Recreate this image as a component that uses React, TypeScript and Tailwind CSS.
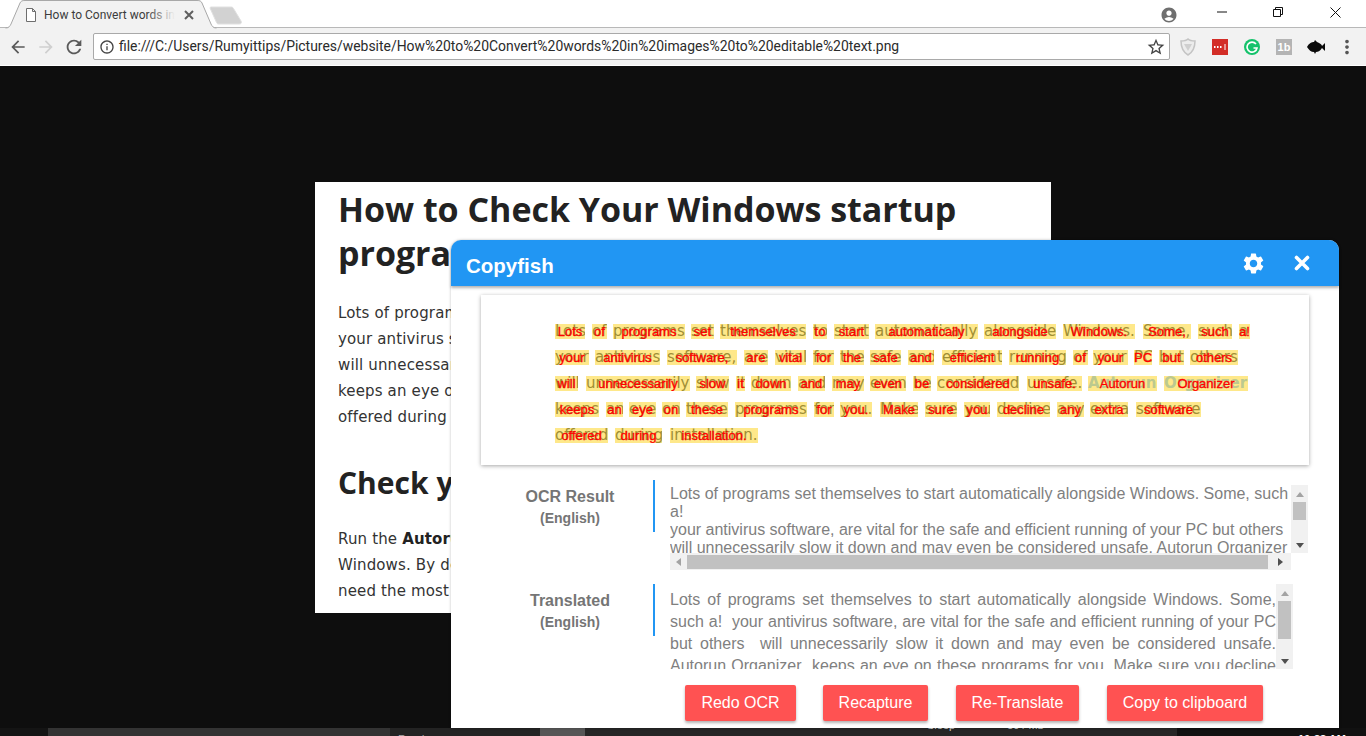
import React from "react";
import { MdArrowBack, MdArrowForward, MdRefresh, MdInfoOutline, MdStarBorder, MdAccountCircle, MdMoreVert, MdSettings } from "react-icons/md";

type W = [string, number, number, boolean?];
const LINES: { top: number; words: W[] }[] = [
  { top: 324, words: [["Lots",555,585],["of",592,607],["programs",613,685],["set",691,714],["themselves",720,806],["to",813,827],["start",834,869],["automatically",875,978],["alongside",984,1056],["Windows.",1063,1135],["Some,",1143,1191],["such",1198,1232],["a!",1239,1250]] },
  { top: 350, words: [["your",555,589],["antivirus",595,660],["software,",667,737],["are",744,768],["vital",775,806],["for",813,834],["the",840,864],["safe",870,901],["and",908,934],["efficient",942,1002],["running",1009,1066],["of",1073,1088],["your",1093,1128],["PC",1134,1152],["but",1159,1184],["others",1190,1238]] },
  { top: 376, words: [["will",555,578],["unnecessarily",586,690],["slow",696,729],["it",736,745],["down",751,791],["and",798,825],["may",832,864],["even",870,906],["be",913,931],["considered",937,1019],["unsafe.",1027,1082],["Autorun",1088,1157,true],["Organizer",1164,1248,true]] },
  { top: 402, words: [["keeps",555,599],["an",606,623],["eye",629,656],["on",662,680],["these",686,728],["programs",735,807],["for",814,834],["you.",840,872],["Make",880,918],["sure",925,957],["you",964,990],["decline",997,1050],["any",1057,1084],["extra",1090,1128],["software",1136,1201]] },
  { top: 428, words: [["offered",555,608],["during",615,662],["installation.",670,758]] },
];

function Word({ w, top }: { w: W; top: number }) {
  const [text, l, r, strong] = w;
  return (
    <div
      className="absolute h-[15px] bg-[#fee88a] overflow-hidden"
      style={{ left: l - 481, top: top - 295, width: r - l }}
    >
      <span
        className={
          strong
            ? "absolute left-0 top-0 whitespace-nowrap font-['DejaVu_Sans',sans-serif] font-bold text-[15px] leading-[15px] text-[#bcc98f]"
            : "absolute left-0 top-0 whitespace-nowrap font-['DejaVu_Sans',sans-serif] text-[15px] leading-[15px] text-[#a08e34]"
        }
      >
        {text}
      </span>
      <span className="absolute inset-0 flex items-center justify-center whitespace-nowrap font-['Liberation_Sans',sans-serif] text-[13px] leading-[15px] text-[#ff0000] [-webkit-text-stroke:0.3px_#ff0000]">
        {text}
      </span>
    </div>
  );
}

function Tri({ dir, dark }: { dir: "u" | "d" | "l" | "r"; dark?: boolean }) {
  const p = { u: "M4 2 L8 7 L0 7 Z", d: "M0 2 L8 2 L4 7 Z", l: "M6 0 L6 8 L1 4 Z", r: "M2 0 L2 8 L7 4 Z" }[dir];
  return (
    <svg width="8" height="8" viewBox="0 0 8 8">
      <path d={p} fill={dark ? "#505050" : "#a3a3a3"} />
    </svg>
  );
}

function VBar({ h, thumb }: { h: string; thumb: string }) {
  return (
    <div className={`w-[17px] ${h} bg-[#f1f1f1] flex flex-col items-center shrink-0`}>
      <div className="w-full flex flex-col items-center">
        <div className="h-[17px] flex items-center justify-center">
          <Tri dir="u" />
        </div>
        <div className={`w-[13px] ${thumb} bg-[#c1c1c1]`} />
      </div>
      <div className="mt-auto h-[17px] flex items-center justify-center">
        <Tri dir="d" dark />
      </div>
    </div>
  );
}

function Label({ title }: { title: string }) {
  return (
    <div className="w-[202px] pl-[36px] pt-[5px] flex flex-col items-center shrink-0 font-['Liberation_Sans',sans-serif] font-bold text-[#757575]">
      <div className="text-[16px] leading-[24px]">{title}</div>
      <div className="text-[14px] leading-[18px]">(English)</div>
    </div>
  );
}

const Btn = ({ w, children }: { w: string; children: React.ReactNode }) => (
  <button className={`${w} h-[36px] bg-[#ff5252] text-white rounded-[2px] text-[16px] font-['Liberation_Sans',sans-serif] shadow-[0_2px_3px_rgba(0,0,0,0.3)]`}>
    {children}
  </button>
);

function TopBar() {
  return (
    <div className="h-[66px] shrink-0 flex flex-col bg-white font-['Roboto',sans-serif]">
      <div className="h-[28px] flex relative border-b border-[#b8b8b8]">
        <svg className="absolute left-[5px] top-0" width="212" height="29" viewBox="0 0 212 29">
          <path d="M0.5 28 C4 28 5 26 6 24 L15 3 C16 1 17 0.5 20 0.5 L192 0.5 C195 0.5 196 1 197 3 L206 24 C207 26 208 28 211.5 28 L211.5 29 L0.5 29 Z" fill="#f2f2f2" />
          <path d="M0.5 28 C4 28 5 26 6 24 L15 3 C16 1 17 0.5 20 0.5 L192 0.5 C195 0.5 196 1 197 3 L206 24 C207 26 208 28 211.5 28" fill="none" stroke="#a8a8a8" />
        </svg>
        <div className="relative w-[212px] ml-[5px] h-full pt-[2px] flex items-center shrink-0">
          <svg className="ml-[20px]" width="12" height="14" viewBox="0 0 12 14">
            <path d="M1.5 0.5 H7.5 L10.5 3.5 V13.5 H1.5 Z M7.5 0.5 V3.5 H10.5" fill="#fff" stroke="#6e6e6e" />
          </svg>
          <div className="ml-[7px] w-[131px] relative overflow-hidden whitespace-nowrap text-[12px] leading-[16px] text-[#3c3c3c]">
            How to Convert words in Images
            <div className="absolute right-0 top-0 w-[28px] h-full bg-linear-to-r from-transparent to-[#f2f2f2]" />
          </div>
          <svg className="ml-[9px]" width="10" height="10" viewBox="0 0 10 10">
            <path d="M1 1 L9 9 M9 1 L1 9" stroke="#5f5f5f" strokeWidth="2" />
          </svg>
        </div>
        <svg className="mt-[6px] ml-[-9px]" width="36" height="19" viewBox="0 0 36 19">
          <path d="M2 2 C2 1 3 1 4 1 L23 1 C24 1 25 1.5 25.5 2.5 L33 15 C34 17 33 18 31 18 L11 18 C9.5 18 9 17.5 8.5 16.5 Z" fill="#d2d2d2" stroke="#e0e0e0" />
        </svg>
        <div className="ml-auto flex items-center">
          <MdAccountCircle className="text-[#6f6f6f] mr-[39px] mt-[2px]" size={18} />
          <svg className="mr-[46px] mb-[3px]" width="10" height="2" viewBox="0 0 10 2"><path d="M0 1 H10" stroke="#111" /></svg>
          <svg className="mr-[47px] mb-[3px]" width="10" height="10" viewBox="0 0 10 10"><path d="M0.5 2.5 H7.5 V9.5 H0.5 Z M2.5 2.5 V0.5 H9.5 V7.5 H7.5" fill="none" stroke="#111" /></svg>
          <svg className="mr-[25px] mb-[3px]" width="11" height="11" viewBox="0 0 11 11"><path d="M0.5 0.5 L10.5 10.5 M10.5 0.5 L0.5 10.5" stroke="#111" /></svg>
        </div>
      </div>
      <div className="h-[37px] bg-[#f2f2f2] flex items-center">
        <MdArrowBack className="ml-[8px] text-[#5a5a5a]" size={20} />
        <MdArrowForward className="ml-[8px] text-[#cfcfcf]" size={20} />
        <MdRefresh className="ml-[7px] text-[#5a5a5a]" size={22} />
        <div className="ml-[8px] w-[1077px] h-[27px] bg-white border border-[#a9a9a9] rounded-[2px] flex items-center">
          <MdInfoOutline className="ml-[5px] text-[#444]" size={16} />
          <span className="ml-[4px] text-[13.93px] text-[#2b2b2b] whitespace-nowrap">
            file:///C:/Users/Rumyittips/Pictures/website/How%20to%20Convert%20words%20in%20images%20to%20editable%20text.png
          </span>
          <MdStarBorder className="ml-auto mr-[3px] text-[#444]" size={20} />
        </div>
        <svg className="ml-[9px]" width="18" height="18" viewBox="0 0 18 18">
          <path d="M2 3 C6 3 8 2 9 1 C10 2 12 3 16 3 C16 10 14 14 9 17 C4 14 2 10 2 3 Z" fill="#ececec" stroke="#c4c4c4" strokeWidth="1.5" />
          <path d="M5 6 H13 L9 13 Z" fill="#cfcfcf" />
        </svg>
        <div className="ml-[15px] w-[16px] h-[16px] bg-[#d32d27] flex items-center justify-center">
          <svg width="14" height="6" viewBox="0 0 14 6"><path d="M1 3 H2.5 M4 3 H5.5 M7 3 H8.5" stroke="#fff" strokeWidth="2" /><path d="M12 0 V6" stroke="#fff" /></svg>
        </div>
        <div className="ml-[16px] w-[16px] h-[16px] rounded-full bg-[#15c26b] flex items-center justify-center">
          <svg width="12" height="12" viewBox="0 0 12 12"><path d="M10 3 A5 5 0 1 0 11 7 H7.5" fill="none" stroke="#fff" strokeWidth="1.6" /></svg>
        </div>
        <div className="ml-[16px] w-[16px] h-[16px] bg-[#b4b4b4] text-white font-bold text-[11px] leading-[16px] text-center font-['Liberation_Sans',sans-serif]">
          1b
        </div>
        <svg className="ml-[15px]" width="18" height="14" viewBox="0 0 18 14">
          <path d="M0 7 C2 3 5 2 7 2 L8 0 L10 2 C13 3 15 5 15 6 L18 3 V11 L15 8 C13 11 11 12 9 12 L8 14 L7 12 C4 12 2 10 0 7 Z" fill="#0b0b0b" />
        </svg>
        <MdMoreVert className="ml-[11px] text-[#555]" size={22} />
      </div>
    </div>
  );
}

function Taskbar() {
  return (
    <div className="h-[8px] shrink-0 flex overflow-hidden text-[11px] leading-[12px] font-['Liberation_Sans',sans-serif] text-[#cfcfcf]">
      <div className="w-[48px] bg-[#141414]" />
      <div className="w-[342px] bg-[#333333]" />
      <div className="w-[150px] bg-[#232323] pl-[8px] pt-[5px] text-[#aaa]">Rand</div>
      <div className="w-[45px] bg-[#565656]" />
      <div className="w-[592px] bg-[#262626] flex">
        <span className="ml-[342px] mt-[-9px]">Sleep</span>
        <span className="ml-[52px] mt-[-9px]">50 / Mb</span>
      </div>
      <div className="flex-1 bg-[#111111] pl-[121px] pt-[5px] whitespace-nowrap font-bold text-white">10:38 AM</div>
    </div>
  );
}

function Modal() {
  return (
    <div className="absolute left-[451px] top-[240px] w-[888px] h-[488px] bg-white flex flex-col rounded-t-[10px] shadow-[0_0_3px_rgba(0,0,0,0.25)] font-['Liberation_Sans',sans-serif]">
      <div className="h-[46px] shrink-0 bg-[#2196f3] rounded-t-[10px] flex items-center shadow-[0_2px_3px_rgba(0,0,0,0.3)] relative z-10">
        <span className="ml-[15px] mt-[6px] text-white font-bold text-[20.5px]">Copyfish</span>
        <MdSettings className="ml-auto text-white" size={25} />
        <svg className="ml-[28px] mr-[29px]" width="16" height="16" viewBox="0 0 16 16">
          <path d="M2.5 2.5 L13.5 13.5 M13.5 2.5 L2.5 13.5" stroke="#fff" strokeWidth="3.6" strokeLinecap="round" />
        </svg>
      </div>
      <div className="mx-[30px] mt-[9px] h-[170px] shrink-0 bg-white relative shadow-[0_1px_4px_rgba(0,0,0,0.35)]">
        {LINES.map((ln) => ln.words.map((w, i) => <Word key={ln.top + "-" + i} w={w} top={ln.top} />))}
      </div>
      <div className="mt-[15px] h-[90px] shrink-0 flex">
        <Label title="OCR Result" />
        <div className="w-[2px] h-[52px] bg-[#2196f3] shrink-0" />
        <div className="ml-[15px] pt-[5px] w-[638px] flex flex-col">
          <div className="flex">
            <div className="w-[621px] h-[68px] overflow-hidden whitespace-nowrap text-[16px] leading-[18px] text-[#808080]">
              Lots of programs set themselves to start automatically alongside Windows. Some, such
              <br />a!
              <br />your antivirus software, are vital for the safe and efficient running of your PC but others
              <br />will unnecessarily slow it down and may even be considered unsafe. Autorun Organizer
            </div>
            <VBar h="h-[68px]" thumb="h-[18px]" />
          </div>
          <div className="w-[621px] h-[17px] bg-[#f1f1f1] flex items-center">
            <div className="w-[17px] flex justify-center"><Tri dir="l" /></div>
            <div className="w-[581px] h-[14px] bg-[#c1c1c1]" />
            <div className="flex-1 flex justify-center"><Tri dir="r" dark /></div>
          </div>
        </div>
      </div>
      <div className="mt-[14px] h-[85px] shrink-0 flex">
        <Label title="Translated" />
        <div className="w-[2px] h-[52px] bg-[#2196f3] shrink-0" />
        <div className="ml-[15px] w-[606px] h-[85px] pt-[5px] overflow-hidden text-[16px] leading-[22px] text-[#808080] text-justify">
          Lots of programs set themselves to start automatically alongside Windows. Some, such a!&nbsp; your antivirus software, are vital for the safe and efficient running of your PC but others&nbsp; will unnecessarily slow it down and may even be considered unsafe. Autorun Organizer&nbsp; keeps an eye on these programs for you. Make sure you decline any extra software offered during installation.
        </div>
        <VBar h="h-[85px]" thumb="h-[38px]" />
      </div>
      <div className="mt-[16px] flex pl-[234px]">
        <Btn w="w-[111px]">Redo OCR</Btn>
        <div className="w-[27px]" />
        <Btn w="w-[105px]">Recapture</Btn>
        <div className="w-[28px]" />
        <Btn w="w-[123px]">Re-Translate</Btn>
        <div className="w-[28px]" />
        <Btn w="w-[156px]">Copy to clipboard</Btn>
      </div>
    </div>
  );
}

export default function App() {
  return (
    <div className="relative w-[1366px] h-[736px] overflow-hidden bg-[#0e0e0e] flex flex-col">
      <TopBar />
      <div className="flex-1 min-h-0 pt-[116px] pl-[315px]">
        <div className="w-[736px] h-[431px] overflow-hidden bg-white pl-[23px] pt-[5px] text-[#222]">
          <h1 className="font-['Open_Sans',sans-serif] font-bold text-[34px] leading-[44px] tracking-[-0.03px] whitespace-nowrap">
            How to Check Your Windows startup
            <br />
            programs with Autorun Organizer
          </h1>
          <p className="mt-[25px] font-['DejaVu_Sans',sans-serif] text-[15px] leading-[26px] tracking-[0.15px] text-[#333] whitespace-nowrap">
            Lots of programs set themselves to start automatically
            <br />your antivirus software, are vital for the safe
            <br />will unnecessarily slow it down and may even
            <br />keeps an eye on these programs for you.
            <br />offered during installation.
          </p>
          <h2 className="mt-[33px] font-['Open_Sans',sans-serif] font-bold text-[30px] leading-[40px] whitespace-nowrap">
            Check your startup programs
          </h2>
          <p className="mt-[23px] font-['DejaVu_Sans',sans-serif] text-[15px] leading-[26px] tracking-[0.15px] text-[#333] whitespace-nowrap">
            Run the <b className="text-[#222]">Autorun Organizer</b> program
            <br />Windows. By default it shows
            <br />need the most attention
          </p>
        </div>
      </div>
      <Taskbar />
      <Modal />
    </div>
  );
}
